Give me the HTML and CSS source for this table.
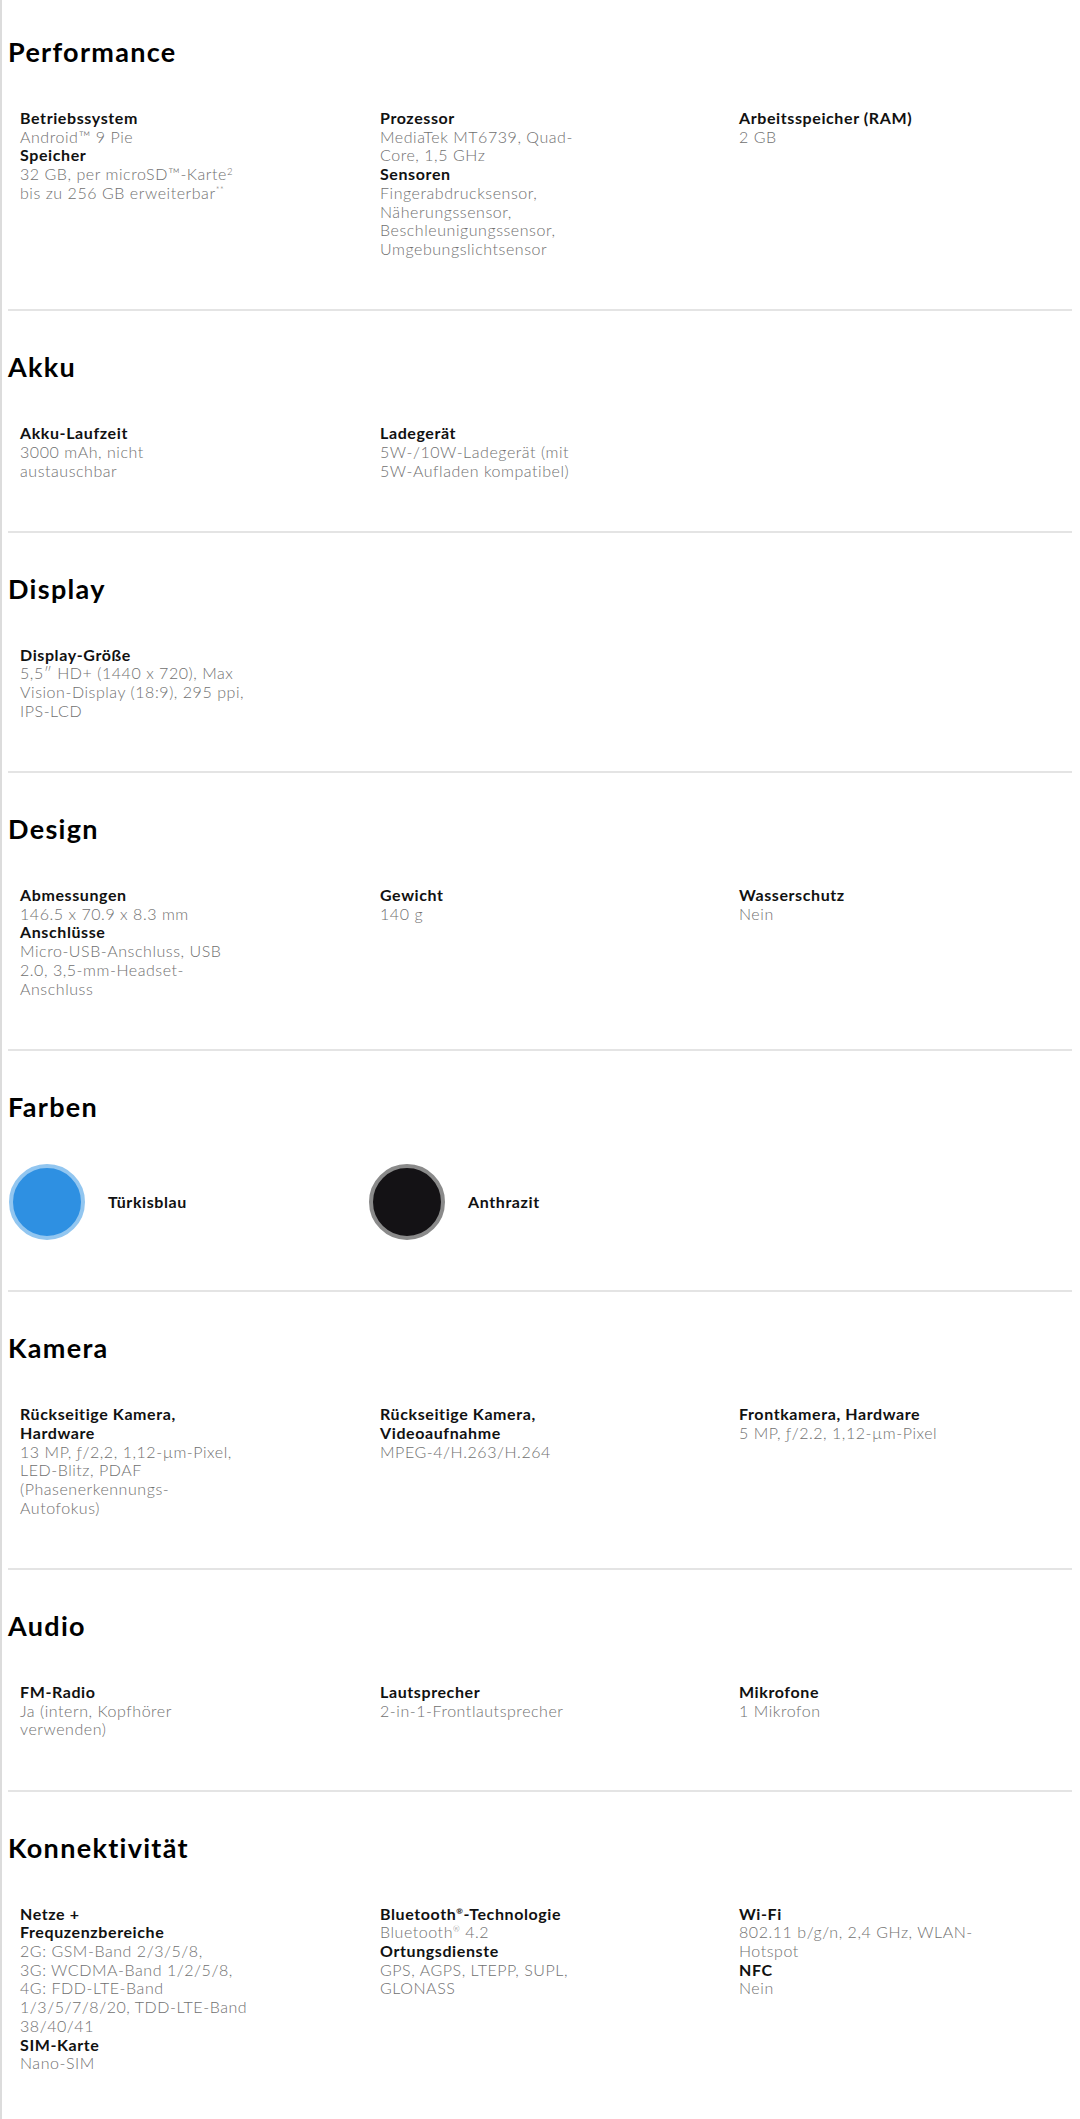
FILE: index.html
```html
<!DOCTYPE html>
<html lang="de">
<head>
<meta charset="utf-8">
<title>Technische Daten</title>
<link rel="stylesheet" href="styles.css">
</head>
<body>
<main class="page">

  <section class="spec first">
    <h2 class="spec-title">Performance</h2>
    <div class="grid">
      <div class="col">
        <div class="label">Betriebssystem</div>
        <div class="value">Android™ 9 Pie</div>
        <div class="label">Speicher</div>
        <div class="value">32 GB, per microSD™-Karte<sup>2</sup><br>bis zu 256 GB erweiterbar<sup class="stars">**</sup></div>
      </div>
      <div class="col">
        <div class="label">Prozessor</div>
        <div class="value">MediaTek MT6739, Quad-<br>Core, 1,5 GHz</div>
        <div class="label">Sensoren</div>
        <div class="value">Fingerabdrucksensor,<br>Näherungssensor,<br>Beschleunigungssensor,<br>Umgebungslichtsensor</div>
      </div>
      <div class="col">
        <div class="label">Arbeitsspeicher (RAM)</div>
        <div class="value">2 GB</div>
      </div>
    </div>
  </section>

  <section class="spec">
    <h2 class="spec-title">Akku</h2>
    <div class="grid">
      <div class="col">
        <div class="label">Akku-Laufzeit</div>
        <div class="value">3000 mAh, nicht<br>austauschbar</div>
      </div>
      <div class="col">
        <div class="label">Ladegerät</div>
        <div class="value">5W-/10W-Ladegerät (mit<br>5W-Aufladen kompatibel)</div>
      </div>
    </div>
  </section>

  <section class="spec">
    <h2 class="spec-title">Display</h2>
    <div class="grid">
      <div class="col">
        <div class="label">Display-Größe</div>
        <div class="value">5,5″ HD+ (1440 x 720), Max<br>Vision-Display (18:9), 295 ppi,<br>IPS-LCD</div>
      </div>
    </div>
  </section>

  <section class="spec">
    <h2 class="spec-title">Design</h2>
    <div class="grid">
      <div class="col">
        <div class="label">Abmessungen</div>
        <div class="value">146.5 x 70.9 x 8.3 mm</div>
        <div class="label">Anschlüsse</div>
        <div class="value">Micro-USB-Anschluss, USB<br>2.0, 3,5-mm-Headset-<br>Anschluss</div>
      </div>
      <div class="col">
        <div class="label">Gewicht</div>
        <div class="value">140 g</div>
      </div>
      <div class="col">
        <div class="label">Wasserschutz</div>
        <div class="value">Nein</div>
      </div>
    </div>
  </section>

  <section class="spec">
    <h2 class="spec-title">Farben</h2>
    <div class="swatches">
      <div class="swatch">
        <span class="dot dot-blue"></span>
        <span class="swatch-name">Türkisblau</span>
      </div>
      <div class="swatch">
        <span class="dot dot-dark"></span>
        <span class="swatch-name">Anthrazit</span>
      </div>
    </div>
  </section>

  <section class="spec">
    <h2 class="spec-title">Kamera</h2>
    <div class="grid">
      <div class="col">
        <div class="label">Rückseitige Kamera,<br>Hardware</div>
        <div class="value">13 MP, ƒ/2,2, 1,12-µm-Pixel,<br>LED-Blitz, PDAF<br>(Phasenerkennungs-<br>Autofokus)</div>
      </div>
      <div class="col">
        <div class="label">Rückseitige Kamera,<br>Videoaufnahme</div>
        <div class="value">MPEG-4/H.263/H.264</div>
      </div>
      <div class="col">
        <div class="label">Frontkamera, Hardware</div>
        <div class="value">5 MP, ƒ/2.2, 1,12-µm-Pixel</div>
      </div>
    </div>
  </section>

  <section class="spec">
    <h2 class="spec-title">Audio</h2>
    <div class="grid">
      <div class="col">
        <div class="label">FM-Radio</div>
        <div class="value">Ja (intern, Kopfhörer<br>verwenden)</div>
      </div>
      <div class="col">
        <div class="label">Lautsprecher</div>
        <div class="value">2-in-1-Frontlautsprecher</div>
      </div>
      <div class="col">
        <div class="label">Mikrofone</div>
        <div class="value">1 Mikrofon</div>
      </div>
    </div>
  </section>

  <section class="spec last">
    <h2 class="spec-title">Konnektivität</h2>
    <div class="grid">
      <div class="col">
        <div class="label">Netze +<br>Frequzenzbereiche</div>
        <div class="value">2G: GSM-Band 2/3/5/8,<br>3G: WCDMA-Band 1/2/5/8,<br>4G: FDD-LTE-Band<br>1/3/5/7/8/20, TDD-LTE-Band<br>38/40/41</div>
        <div class="label">SIM-Karte</div>
        <div class="value">Nano-SIM</div>
      </div>
      <div class="col">
        <div class="label">Bluetooth<sup class="reg">®</sup>-Technologie</div>
        <div class="value">Bluetooth<sup class="reg">®</sup> 4.2</div>
        <div class="label">Ortungsdienste</div>
        <div class="value">GPS, AGPS, LTEPP, SUPL,<br>GLONASS</div>
      </div>
      <div class="col">
        <div class="label">Wi-Fi</div>
        <div class="value">802.11 b/g/n, 2,4 GHz, WLAN-<br>Hotspot</div>
        <div class="label">NFC</div>
        <div class="value">Nein</div>
      </div>
    </div>
  </section>

</main>
</body>
</html>
```

FILE: styles.css
```css
html, body {
  margin: 0;
  padding: 0;
  background: #ffffff;
}

body {
  font-family: "Lato", "Liberation Sans", sans-serif;
  color: #111111;
}

.page {
  min-height: 2119px;
  box-sizing: border-box;
  border-left: 2px solid #dcdcdc;
  padding: 0 8px 0 6px;
}

.spec {
  padding: 40px 0 50.5px;
  border-bottom: 2px solid #e4e4e4;
}

.spec.first {
  padding-top: 36px;
}

.spec.last {
  border-bottom: none;
}

.spec-title {
  margin: 0 0 41px;
  font-size: 27px;
  line-height: 32px;
  font-weight: 700;
  letter-spacing: 1.3px;
  color: #000000;
}

.grid {
  display: grid;
  grid-template-columns: 360px 359px 1fr;
  padding-left: 12px;
}

.col {
  min-width: 0;
}

.label {
  font-size: 16px;
  line-height: 18.7px;
  font-weight: 700;
  letter-spacing: 0.6px;
  color: #111111;
}

.value {
  font-size: 16px;
  line-height: 18.7px;
  font-weight: 300;
  letter-spacing: 0.55px;
  color: #707070;
}

sup {
  font-size: 0.6em;
  line-height: 0;
  vertical-align: 0.55em;
}

sup.stars {
  font-size: 0.55em;
  vertical-align: 0.7em;
}

sup.reg {
  font-size: 0.5em;
  vertical-align: 0.8em;
}

.swatches {
  display: grid;
  grid-template-columns: 360px 360px 1fr;
  padding-left: 1px;
}

.swatch {
  display: flex;
  align-items: center;
  gap: 23px;
}

.dot {
  width: 76px;
  height: 76px;
  box-sizing: border-box;
  border-radius: 50%;
  border: 4px solid;
  flex: none;
}

.dot-blue {
  background: #2e90e2;
  border-color: #92c6f0;
}

.dot-dark {
  background: #141215;
  border-color: #8a8a8a;
}

.swatch-name {
  font-size: 16px;
  font-weight: 700;
  letter-spacing: 0.6px;
  color: #111111;
}
```
